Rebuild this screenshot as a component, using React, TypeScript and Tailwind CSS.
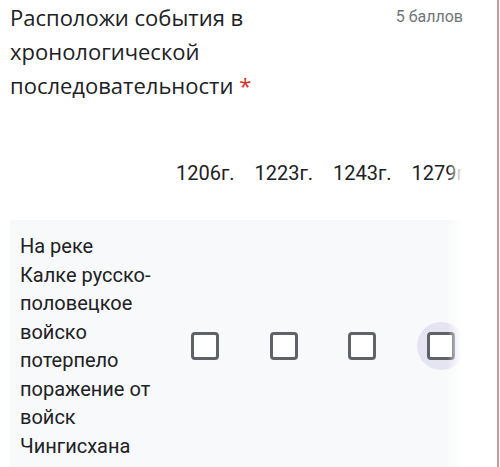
import { useState } from "react";

const years = ["1206г.", "1223г.", "1243г.", "1279г."];

function Box({ hover }: { hover?: boolean }) {
  return (
    <div className="relative flex h-[48px] w-[48px] items-center justify-center">
      {hover && <div className="absolute inset-0 rounded-full bg-[#e7e4f2]" />}
      <div className="relative h-[28px] w-[28px] rounded-[4px] border-[3px] border-[#5f6368] bg-white" />
    </div>
  );
}

export default function App() {
  const [checked] = useState([false, false, false, false]);
  return (
    <div className="flex h-[467px] w-[500px] overflow-hidden bg-white" style={{ fontFamily: "Roboto, 'Noto Sans', sans-serif" }}>
      <div className="relative w-[497px] shrink-0">
        <div className="flex justify-between pl-[10px] pr-[34px]">
          <h1 className="w-[300px] font-['Open_Sans',sans-serif] text-[22px] leading-[34px] text-[#202124]">
            Расположи события в хронологической последовательности <span className="text-[#d93025]">*</span>
          </h1>
          <span className="mt-[7px] text-[16px] leading-[20px] text-[#70757a]">5 баллов</span>
        </div>

        <div className="relative ml-[10px] mt-[57px] w-[452px] overflow-hidden">
          <div className="grid grid-cols-[156px_78.5px_78.5px_78.5px_78.5px]">
            <div />
            {years.map((y) => (
              <div key={y} className="whitespace-nowrap text-center text-[20px] leading-[28px] text-[#202124]">{y}</div>
            ))}
          </div>
          <div className="mt-[33px] grid grid-cols-[156px_78.5px_78.5px_78.5px_78.5px] items-center bg-[#f8f9fa] pt-[12px] pb-[20px]">
            <div className="pl-[10px] text-[20px] leading-[28.5px] text-[#202124]">
              На реке<br />Калке русско-<br />половецкое<br />войско<br />потерпело<br />поражение от<br />войск<br />Чингисхана
            </div>
            {checked.map((_, i) => (
              <div key={i} className="flex justify-center">
                <Box hover={i === 3} />
              </div>
            ))}
          </div>
          <div className="pointer-events-none absolute right-0 top-0 h-full w-[14px] bg-gradient-to-r from-transparent to-white" />
        </div>
      </div>
      <div className="w-[2px] shrink-0 bg-[#c79a9a]" />
      <div className="flex-1 bg-white" />
    </div>
  );
}
